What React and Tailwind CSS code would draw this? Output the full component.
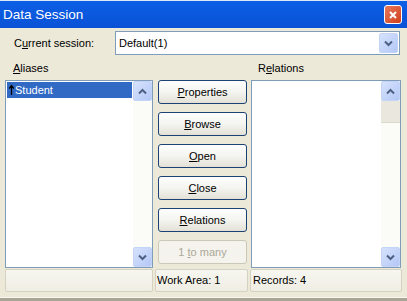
import React from "react";

const Chevron = ({ up }) => (
  <svg width="9" height="7" viewBox="0 0 9 7">
    <path
      d={up ? "M1 5.5 L4.5 2 L8 5.5" : "M1 1.5 L4.5 5 L8 1.5"}
      stroke="#4D6185"
      strokeWidth="2"
      fill="none"
    />
  </svg>
);

const ScrollBtn = ({ up }) => (
  <div className="w-[19px] h-[20px] rounded-[2px] border border-[#c4d4f7] bg-gradient-to-br from-[#d6e2fd] to-[#b4c8f6] flex items-center justify-center shrink-0">
    <Chevron up={up} />
  </div>
);

const Button = ({ children, disabled }) => (
  <div
    className={
      "h-[24px] w-full rounded-[3px] border flex items-center justify-center whitespace-pre " +
      (disabled
        ? "border-[#cbc8b8] bg-[#f4f3ee] text-[#aca899]"
        : "border-[#1c4273] bg-gradient-to-b from-[#fefefd] via-[#f4f4f0] to-[#e3e1d6] text-black")
    }
  >
    {children}
  </div>
);

const U = ({ children }) => <span className="underline underline-offset-[1px]">{children}</span>;

export default function App() {
  return (
    <div className="w-[407px] h-[301px] bg-[#ECE9D8] flex flex-col overflow-hidden font-['Liberation_Sans',Arial,sans-serif] text-[11px] leading-[13px] text-black">
      {/* Title bar */}
      <div className="h-px bg-[#dfe6f6]" />
      <div className="h-[27px] bg-gradient-to-b from-[#0b5fe6] to-[#0a52d6] flex items-center justify-between pl-[3px] pr-[5px]">
        <span className="text-white text-[13.5px] leading-[16px] mt-[1px]">Data Session</span>
        <div className="w-[18px] h-[19px] rounded-[3px] border border-white bg-gradient-to-br from-[#e9785a] to-[#cf3d17] flex items-center justify-center">
          <svg width="8" height="8" viewBox="0 0 8 8">
            <path d="M1 1 L7 7 M7 1 L1 7" stroke="white" strokeWidth="2" />
          </svg>
        </div>
      </div>

      {/* Combo row */}
      <div className="mt-[3px] h-[24px] flex items-center">
        <span className="ml-[14px] w-[101px]">
          C<U>u</U>rrent session:
        </span>
        <div className="w-[285px] h-[24px] border border-[#7f9db9] bg-white flex items-center justify-between pl-[3px] pr-px">
          <span>Default(1)</span>
          <ScrollBtn />
        </div>
      </div>

      {/* Labels */}
      <div className="mt-[7px] h-[13px] flex">
        <span className="ml-[13px] w-[245px]">
          <U>A</U>liases
        </span>
        <span>
          R<U>e</U>lations
        </span>
      </div>

      {/* Main */}
      <div className="mt-[5px] h-[188px] flex ml-[5px]">
        {/* Aliases list */}
        <div className="w-[148px] h-full border border-[#7f9db9] bg-white flex">
          <div className="flex-1 p-px">
            <div className="h-[16px] bg-[#316ac5] flex items-center text-white">
              <svg width="7" height="12" viewBox="0 0 7 12" className="ml-px">
                <path d="M3.5 11 L3.5 2 M1.2 4.5 L3.5 1.5 L5.8 4.5" stroke="black" strokeWidth="1.3" fill="none" />
              </svg>
              <span>Student</span>
            </div>
          </div>
          <div className="w-[19px] flex flex-col bg-[#fbfbf8]">
            <ScrollBtn up />
            <div className="flex-1" />
            <ScrollBtn />
          </div>
        </div>

        {/* Buttons */}
        <div className="ml-[5px] w-[89px] flex flex-col gap-[8px]">
          <Button>
            <U>P</U>roperties
          </Button>
          <Button>
            <U>B</U>rowse
          </Button>
          <Button>
            <U>O</U>pen
          </Button>
          <Button>
            <U>C</U>lose
          </Button>
          <Button>
            <U>R</U>elations
          </Button>
          <Button disabled>
            {"1 "}
            <U>t</U>
            {"o many"}
          </Button>
        </div>

        {/* Relations list */}
        <div className="ml-[4px] w-[150px] h-full border border-[#7f9db9] bg-white flex">
          <div className="flex-1" />
          <div className="w-[19px] flex flex-col bg-[#fbfbf8]">
            <ScrollBtn up />
            <div className="h-[22px] bg-[#e9e7de] border-b border-[#dcd9cc]" />
            <div className="flex-1" />
            <ScrollBtn />
          </div>
        </div>
      </div>

      {/* Status */}
      <div className="mt-px h-[23px] flex">
        <div className="ml-[5px] w-[148px] rounded-[2px] border border-[#d6d2c1] bg-gradient-to-b from-[#f7f6f0] to-[#efede3]" />
        <div className="ml-[2px] w-[93px] rounded-[2px] border border-[#d6d2c1] bg-gradient-to-b from-[#f7f6f0] to-[#efede3] flex items-center pl-px">
          Work Area: 1
        </div>
        <div className="ml-[2px] w-[152px] rounded-[2px] border border-[#d6d2c1] bg-gradient-to-b from-[#f7f6f0] to-[#efede3] flex items-center pl-[2px]">
          Records: 4
        </div>
      </div>

      <div className="mt-[5px] h-px bg-[#f7f6f0]" />
      <div className="flex-1 bg-[#a9a594]" />
    </div>
  );
}
